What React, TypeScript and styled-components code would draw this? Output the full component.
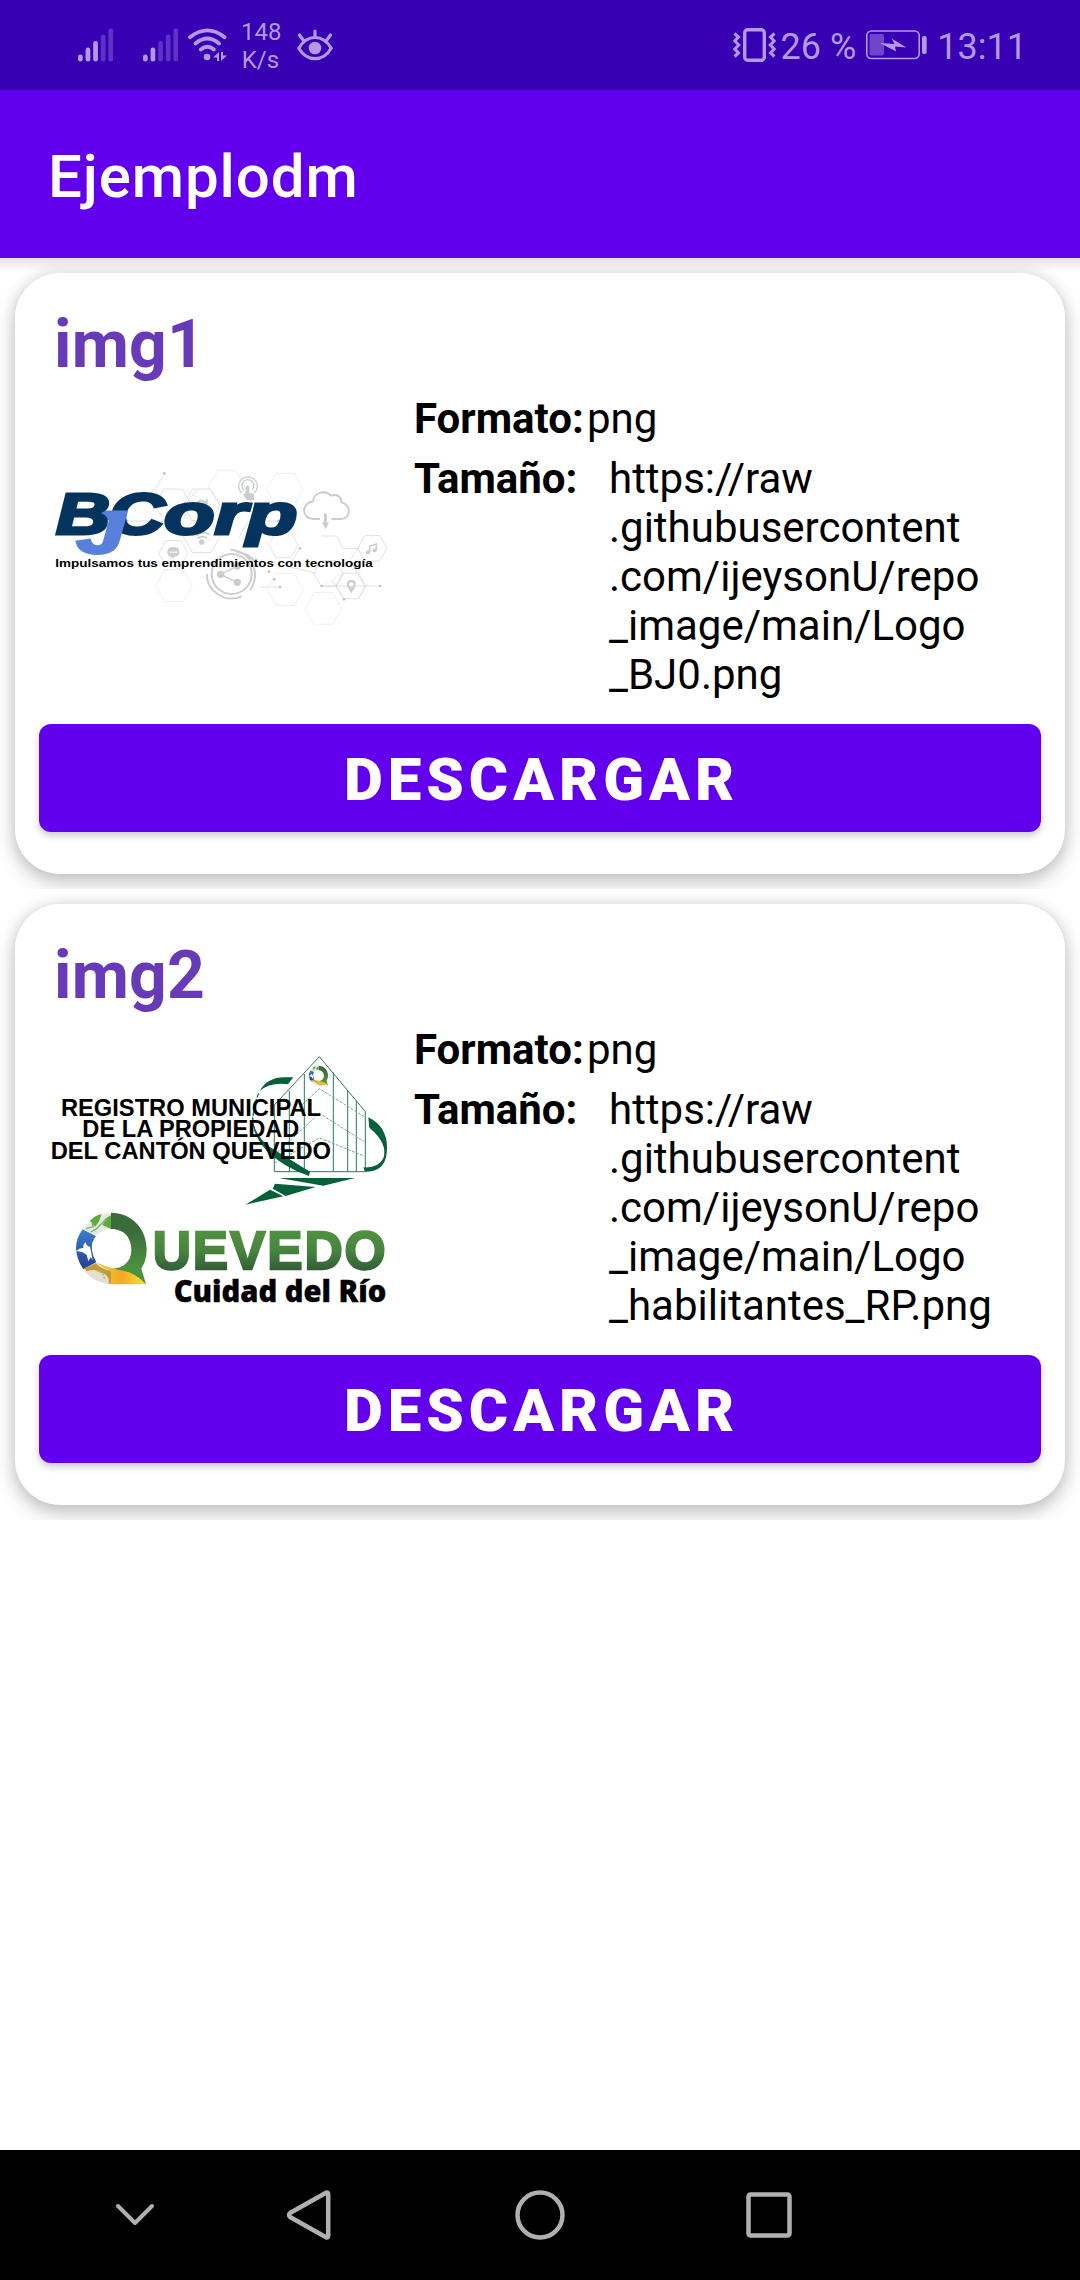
import React from "react";
import styled, { createGlobalStyle } from "styled-components";

const GlobalStyle = createGlobalStyle`
  body { margin: 0; background: #fff; }
  * { box-sizing: border-box; }
`;

const STATUS = "#b399e8";

const Screen = styled.div`
  width: 1080px;
  height: 2280px;
  display: flex;
  flex-direction: column;
  font-family: Roboto, sans-serif;
  background: #fff;
  overflow: hidden;
`;
const StatusBar = styled.header`
  height: 90px;
  flex: none;
  display: flex;
  justify-content: space-between;
  align-items: center;
  padding: 0 53px 0 78px;
  background: #3700b3;
  color: ${STATUS};
  font-size: 36px;
`;
const StatusGroup = styled.div`
  display: flex;
  align-items: center;
`;
const Icon = styled.svg<{ $gap?: number }>`
  display: block;
  flex: none;
  margin-left: ${(p) => p.$gap ?? 0}px;
`;
const NetSpeed = styled.div`
  width: 39px;
  margin-left: 13px;
  font-size: 24px;
  line-height: 28px;
  text-align: center;
  padding-top: 2px;
`;
const StatusText = styled.span<{ $gap: number }>`
  margin-left: ${(p) => p.$gap}px;
  line-height: 42px;
  padding-top: 3px;
  white-space: pre;
`;
const AppBar = styled.div`
  height: 168px;
  flex: none;
  display: flex;
  align-items: center;
  padding: 5px 48px 0;
  background: #6200ee;
`;
const AppTitle = styled.h1`
  margin: 0;
  font-size: 60px;
  font-weight: 500;
  line-height: 70px;
  letter-spacing: 0.9px;
  color: #fff;
`;
const List = styled.main`
  flex: 1;
  background: linear-gradient(#0000001c, #0000 14px) no-repeat;
`;
const Item = styled.div`
  height: 631px;
  padding: 15px;
  overflow: hidden;
`;
const Card = styled.article`
  height: 601px;
  padding: 33px 24px 0;
  border-radius: 45px;
  background: #fff;
  box-shadow: 0 9px 20px rgba(0, 0, 0, 0.2), 0 0 16px rgba(0, 0, 0, 0.12);
`;
const CardTitle = styled.h2`
  margin: 0 0 0 15px;
  font-size: 66px;
  font-weight: 700;
  line-height: 78px;
  letter-spacing: 0.2px;
  color: #673ab7;
`;
const Body = styled.div`
  height: 340px;
  display: flex;
`;
const Picture = styled.svg`
  display: block;
  flex: none;
  width: 370px;
  height: 340px;
  margin-left: -9px;
`;
const Details = styled.div`
  margin-left: 14px;
  padding-top: 10px;
  font-size: 42px;
  line-height: 49px;
  color: #000;
`;
const Row = styled.div`
  display: flex;
  margin-bottom: 11px;
`;
const Label = styled.span<{ $width: number }>`
  width: ${(p) => p.$width}px;
  flex: none;
  font-weight: 700;
`;
const Value = styled.span`
  white-space: pre-line;
`;
const Button = styled.button`
  display: block;
  width: 1002px;
  height: 108px;
  border: 0;
  border-radius: 12px;
  background: #6200ee;
  color: #fff;
  font: 900 60px/104px Roboto, sans-serif;
  letter-spacing: 5px;
  padding: 4px 0 0 3px;
  box-shadow: 0 4px 7px rgba(0, 0, 0, 0.2);
`;
const NavBar = styled.nav`
  height: 130px;
  flex: none;
  display: flex;
  align-items: center;
  padding-left: 110px;
  background: #000;
`;

const Signal = ({ level, gap }: { level: number; gap?: number }) => (
  <Icon $gap={gap} width="35" height="34" viewBox="0 0 35 34" fill={STATUS}>
    {[7, 14, 20.5, 27, 33].map((h, i) => (
      <rect key={h} x={i * 7.6} y={33.5 - h} width="4.7" height={h} rx="2.2" opacity={i < level ? 1 : 0.32} />
    ))}
  </Icon>
);

const Wifi = () => (
  <Icon $gap={10} width="40" height="34" viewBox="0 0 40 34" fill="none" stroke={STATUS} strokeWidth="3.8" strokeLinecap="round">
    <path d="M2 9.200Q19.500-4.500 36.500 9.200M7.500 15.500Q19.500 5.500 31 15.500M12.800 21.500Q19.500 16 25.800 21.500" />
    <circle cx="19" cy="29" r="3.300" fill={STATUS} stroke="none" />
    <path d="M25 29.500L31 24V33H29V29.500ZM33 24V33L39 27.500H35V24Z" fill={STATUS} stroke="none" />
  </Icon>
);

const Eye = () => (
  <Icon $gap={17} width="36" height="32" viewBox="0 0 36 32" fill="none" stroke={STATUS} strokeWidth="3.2" strokeLinecap="round">
    <path d="M1.800 19.200Q8 8.500 18 8.500T34.200 19.200Q28 29.700 18 29.700T1.800 19.200ZM18 2V8M2.500 6L6.500 11.500M33.500 6L29.500 11.500" />
    <circle cx="18" cy="19" r="6.300" fill={STATUS} stroke="none" />
  </Icon>
);

const Vibrate = () => (
  <Icon width="43" height="34" viewBox="0 0 43 34" fill="none" stroke={STATUS} strokeWidth="3">
    <rect x="11.700" y="1.700" width="19.600" height="30.600" rx="3" strokeWidth="3.400" />
    <path d="M1.500 5.500L5.500 9L1.800 13L5.800 17L1.800 21L5.500 25L1.500 28.500M41.500 5.500L37.500 9L41.200 13L37.200 17L41.200 21L37.500 25L41.500 28.500" />
  </Icon>
);

const Battery = () => (
  <Icon $gap={10} width="61" height="30" viewBox="0 0 61 30" fill={STATUS}>
    <rect x="0.800" y="1" width="52.400" height="27.500" rx="4.500" fill="none" stroke={STATUS} strokeWidth="1.600" />
    <rect x="3.500" y="4" width="14.500" height="21.500" rx="2" opacity="0.45" />
    <path d="M25.500 8.500L28.500 14L14 13L30 21.500L29 16.500L40.500 17.500Z" />
    <rect x="56" y="6" width="4.700" height="18" rx="2" />
  </Icon>
);

/* Logo artwork is drawn on a grid of one third of a pixel */
const HEXES = [
  [430, 165, 55], [515, 165, 55], [590, 110, 55], [765, 118, 55], [515, 260, 55], [430, 310, 44],
  [760, 285, 44], [1027, 295, 44], [895, 370, 44], [963, 408, 44], [765, 418, 55], [880, 475, 55], [432, 407, 55],
];
const BJCorpLogo = () => (
  <Picture viewBox="0 0 370 340">
    <g transform="translate(0 66) scale(.33333)">
      <g fill="none" stroke="#d9dbdc" strokeWidth="2.400">
        {HEXES.map(([x, y, r], i) => (
          <path key={i} opacity={i === 2 || i === 3 || i > 9 ? 0.6 : 1}
            d={`M${x - r} ${y}l${r / 2} ${-r * 0.87}h${r}l${r / 2} ${r * 0.87}l${-r / 2} ${r * 0.87}h${-r}Z`} />
        ))}
        <path d="M403 70L375 118L425 205M290 213H430L500 120M625 265L655 213H745M640 118L670 165M690 411H750M810 295L775 350L860 370M875 408H1050M985 445L1005 410L960 330L985 296H940L920 258H875M905 390L942 448" />
        <path d="M470 125L600 190M485 300L620 225M875 408L970 350" strokeDasharray="3 5" />
      </g>
      <g fill="#bfc1c2">
        {[[403, 70], [290, 213], [745, 213], [750, 411], [810, 295], [875, 408], [1050, 408], [942, 448], [717, 365], [733, 388]].map(([x, y]) => (
          <circle key={`${x}-${y}`} cx={x} cy={y} r="4" />
        ))}
      </g>
      <g fill="none" stroke="#cbcdcf" strokeWidth="6">
        <circle cx="605" cy="372" r="60" />
        <path d="M530 372A75 75 0 0 0 635 439M602 300A75 75 0 0 1 660 420M620 306A76 76 0 0 1 684 350" />
        <path d="M572 373L622 348M572 373L622 397" strokeWidth="4" />
        <path d="M870 207H850C815 207 812 160 849 154C851 128 885 118 903 137C923 131 935 142 934 157C966 166 963 207 932 207H904" />
        <path d="M886 190V222" strokeWidth="9" />
        <path d="M635 129A28 28 0 1 1 673 129M641 120A18 18 0 1 1 666 120" strokeWidth="4" />
        <path d="M498 258Q515 240 539 254M502 266Q517 255 531 264" strokeWidth="5" />
        <path d="M1019 306V288L1039 282V300" strokeWidth="5" />
        <path d="M499 170Q505 140 530 160M530 148V162H515" strokeWidth="6" />
      </g>
      <g fill="#cbcdcf">
        <path d="M876 217H897L887 238ZM647 110Q653 104 658 110V128L672 132V150H650L638 132L647 131Z" />
        <circle cx="572" cy="373" r="11" /><circle cx="622" cy="348" r="11" /><circle cx="622" cy="397" r="11" />
        <circle cx="515" cy="276" r="8" />
        <path d="M412 306Q412 291 430 291T448 306Q448 320 433 321L425 328V321Q412 319 412 306Z" />
        <circle cx="1014" cy="307" r="6" /><circle cx="1034" cy="301" r="6" />
        <path fillRule="evenodd" d="M964 430L952 410Q947 389 964 389Q981 389 976 410ZM964 397a7 7 0 1 0 .1 0Z" />
      </g>
      <g fill="#fff"><circle cx="422" cy="307" r="3" /><circle cx="430" cy="307" r="3" /><circle cx="438" cy="307" r="3" /></g>
      <g fontFamily="Liberation Sans, sans-serif" fontWeight="700" fontStyle="italic" fill="#04345d" stroke="#04345d" strokeWidth="9">
        <text x="238" y="253" fontSize="172" textLength="166" lengthAdjust="spacingAndGlyphs">C</text>
        <text x="402" y="251" fontSize="172" textLength="400" lengthAdjust="spacingAndGlyphs">orp</text>
        <text x="140" y="309" fontSize="176" fill="#5680dc" stroke="#5680dc" textLength="142" lengthAdjust="spacingAndGlyphs">J</text>
        <text x="78" y="251" fontSize="170" textLength="162" lengthAdjust="spacingAndGlyphs">B</text>
      </g>
      <text x="76" y="352" fontFamily="Liberation Sans, sans-serif" fontWeight="700" fontSize="35" fill="#000" textLength="952" lengthAdjust="spacingAndGlyphs">Impulsamos tus emprendimientos con tecnología</text>
    </g>
  </Picture>
);

const QMark = () => (
  <>
    <path d="M243 548C300 548 350 590 350 660Q350 690 334 716L348 763L243 716C285 716 304 690 304 660C304 625 285 597 243 597Z" fill="url(#leaf)" />
    <path d="M138 655Q138 625 158 598L198 618Q182 638 186 660Q188 680 199 697L160 718Q140 690 138 655Z" fill="url(#sky)" />
    <path d="M158 598Q185 555 243 548V597Q215 598 198 618Z" fill="#e3ebe0" />
    <path d="M180 572Q195 556 215 552L208 572L196 590ZM217 585L232 562L243 556V597Z" fill="#62a93b" />
    <path d="M168 596L190 590L186 580M182 606L200 596L230 565" fill="none" stroke="#7fae6c" strokeWidth="4" />
    <path d="M138 664Q150 652 160 654Q158 644 166 636Q171 650 180 650Q184 668 188 690L182 682L175 694L170 674Q152 662 138 664Z" fill="#fff" />
    <path d="M160 718L199 697Q218 718 245 716V763Q190 760 160 718Z" fill="#e4dfd2" />
    <path d="M163 714L197 700Q215 720 243 722V760L236 762Q240 735 215 728Q195 715 170 724Z" fill="#bd9a3c" />
    <path d="M200 722Q222 726 224 750" fill="none" stroke="#cdb36a" strokeWidth="5" strokeDasharray="6 4" />
    <path d="M200 697Q250 720 280 722Q320 730 348 763H243V722Q220 718 200 697Z" fill="url(#sun)" />
  </>
);

const QuevedoLogo = () => (
  <Picture viewBox="0 0 370 340">
    <defs>
      <linearGradient id="leaf" x1="0" y1="0" x2="0" y2="1">
        <stop offset=".25" stopColor="#3b6b3b" /><stop offset=".75" stopColor="#4c9140" />
      </linearGradient>
      <linearGradient id="sky" x1="0" y1="0" x2="0" y2="1">
        <stop offset="0" stopColor="#3d7fd0" /><stop offset="1" stopColor="#22408f" />
      </linearGradient>
      <linearGradient id="word" x1="0" y1="0" x2="0" y2="1">
        <stop offset=".2" stopColor="#4f9140" /><stop offset=".5" stopColor="#48843e" /><stop offset=".85" stopColor="#315b38" />
      </linearGradient>
      <linearGradient id="sun">
        <stop offset="0" stopColor="#f3d33a" /><stop offset=".5" stopColor="#f5a823" /><stop offset="1" stopColor="#f3e72f" />
      </linearGradient>
    </defs>
    <g transform="translate(0 15) scale(.33333)">
      <g fill="none" stroke="#287a5b" strokeWidth="3">
        <path d="M733 425V225L868 80L1006 245V425ZM778 182V425M823 132V425M910 127V425M953 180V425M979 212V425" />
        <path d="M778 260L868 176L1003 260M733 375L868 250L1003 335M733 400L868 324L1003 378" stroke="#79a894" strokeDasharray="9 4" />
      </g>
      <g fill="#076039">
        <path d="M790 142L774 163Q720 156 690 183Q710 142 765 142Z" />
        <path d="M668 250Q664 300 710 345L840 425L837 438Q757 410 711 363Q659 306 668 250Z" />
        <path d="M1015 262Q1071 290 1071 352Q1072 428 1005 425L1000 412Q1045 415 1060 385Q1075 340 1018 293Z" />
        <path d="M747 444H975L880 467ZM735 461L857 471L767 498L728 476ZM720 479L760 499L646 524Z" />
      </g>
      <path d="M686 190Q670 225 668 280" fill="none" stroke="#287a5b" strokeWidth="4" strokeDasharray="14 5" />
      <g transform="translate(799 -42) scale(.272)"><QMark /></g>
      <g fontFamily="Liberation Sans, sans-serif" fontWeight="700" fontSize="71" fill="#000">
        <text x="93" y="258" textLength="780" lengthAdjust="spacingAndGlyphs">REGISTRO MUNICIPAL</text>
        <text x="157" y="322" textLength="651" lengthAdjust="spacingAndGlyphs">DE LA PROPIEDAD</text>
        <text x="62" y="386" textLength="841" lengthAdjust="spacingAndGlyphs">DEL CANTÓN QUEVEDO</text>
      </g>
      <QMark />
      <text x="368" y="717" fontFamily="Liberation Sans, sans-serif" fontWeight="700" fontSize="163" letterSpacing="6" fill="url(#word)" stroke="url(#word)" strokeWidth="7" textLength="705" lengthAdjust="spacingAndGlyphs">UEVEDO</text>
      <text x="431" y="815" fontFamily="Open Sans, sans-serif" fontWeight="800" fontSize="88" fill="#000" stroke="#000" strokeWidth="1" textLength="638" lengthAdjust="spacingAndGlyphs">Cuidad del Río</text>
    </g>
  </Picture>
);

const items = [
  { title: "img1", format: "png", lines: ["https://raw", ".githubusercontent", ".com/ijeysonU/repo", "_image/main/Logo", "_BJ0.png"], Logo: BJCorpLogo },
  { title: "img2", format: "png", lines: ["https://raw", ".githubusercontent", ".com/ijeysonU/repo", "_image/main/Logo", "_habilitantes_RP.png"], Logo: QuevedoLogo },
];

export default function App() {
  return (
    <Screen>
      <GlobalStyle />
      <StatusBar>
        <StatusGroup>
          <Signal level={3} />
          <Signal level={2} gap={30} />
          <Wifi />
          <NetSpeed>148 K/s</NetSpeed>
          <Eye />
        </StatusGroup>
        <StatusGroup>
          <Vibrate />
          <StatusText $gap={5}>26 %</StatusText>
          <Battery />
          <StatusText $gap={10}>13:11</StatusText>
        </StatusGroup>
      </StatusBar>
      <AppBar><AppTitle>Ejemplodm</AppTitle></AppBar>
      <List>
        {items.map(({ title, format, lines, Logo }) => (
          <Item key={title}>
            <Card>
              <CardTitle>{title}</CardTitle>
              <Body>
                <Logo />
                <Details>
                  <Row><Label $width={173}>Formato:</Label><Value>{format}</Value></Row>
                  <Row><Label $width={195}>Tamaño:</Label><Value>{lines.join("\n")}</Value></Row>
                </Details>
              </Body>
              <Button>DESCARGAR</Button>
            </Card>
          </Item>
        ))}
      </List>
      <NavBar>
        <Icon width="50" height="50" viewBox="0 0 50 50" fill="none" stroke="#b0b0b0" strokeWidth="4" strokeLinecap="round" strokeLinejoin="round">
          <path d="M8 16L25 33L42 16" />
        </Icon>
        <Icon $gap={125} width="52" height="52" viewBox="0 0 52 52" fill="none" stroke="#b0b0b0" strokeWidth="4.500" strokeLinejoin="round">
          <path d="M5 24Q3 26 5 28L41.500 48.500Q43.200 48.500 43.200 46.500V5.500Q43.200 3.500 41.500 3.500Z" />
        </Icon>
        <Icon $gap={177} width="52" height="52" viewBox="0 0 52 52" fill="none" stroke="#b0b0b0" strokeWidth="4.500">
          <circle cx="26" cy="26" r="22.500" />
        </Icon>
        <Icon $gap={178} width="50" height="50" viewBox="0 0 50 50" fill="none" stroke="#b0b0b0" strokeWidth="4.500">
          <rect x="4.500" y="4.500" width="41" height="41" rx="2" />
        </Icon>
      </NavBar>
    </Screen>
  );
}
